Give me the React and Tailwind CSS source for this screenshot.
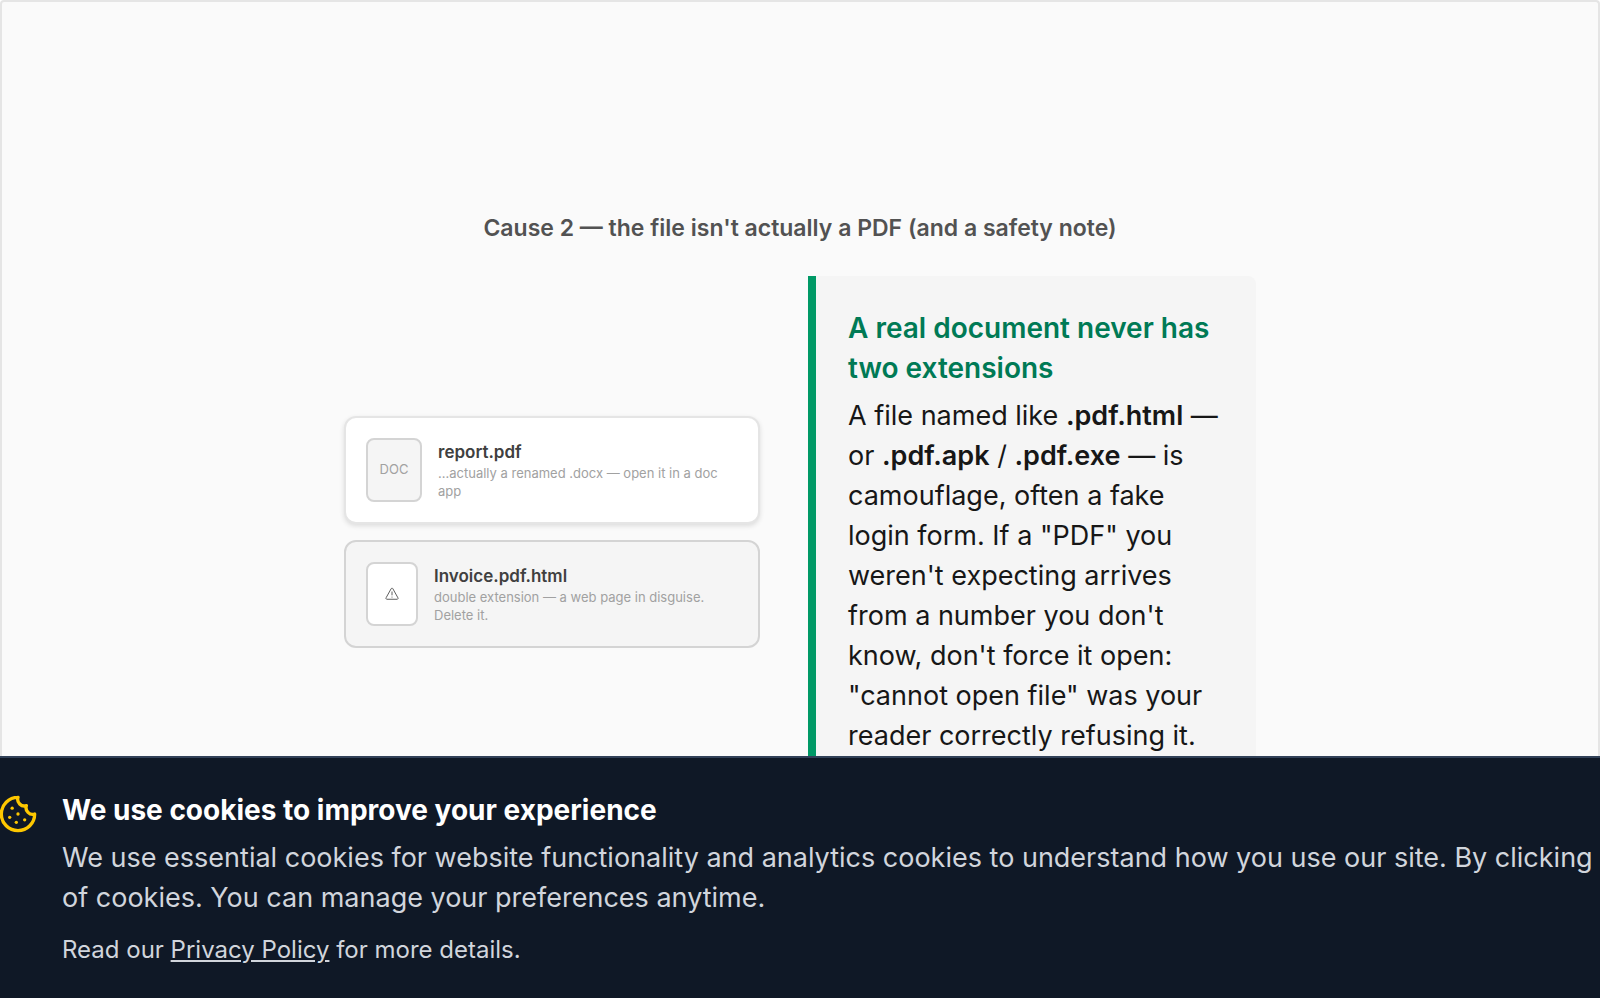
import { Cookie } from "lucide-react";

function WarningIcon() {
  return (
    <svg viewBox="0 0 12 12" className="size-3.5" fill="none" stroke="currentColor" strokeWidth="0.8" strokeLinejoin="round" strokeLinecap="round" aria-label="Warning">
      <path d="M5.3 1.4a.8.8 0 0 1 1.4 0l4.4 7.9a.8.8 0 0 1-.7 1.2H1.6a.8.8 0 0 1-.7-1.2z" />
      <path d="M6 4.2v2.6M6 8.6v.1" />
    </svg>
  );
}

function FileCard({ icon, iconClass, name, note, cardClass }) {
  return (
    <div className={"flex items-center gap-4 rounded-xl border-2 p-5 " + cardClass}>
      <div className={"flex h-16 shrink-0 items-center justify-center rounded-lg border-2 border-[#d4d4d4] text-[13px] " + iconClass}>
        {icon}
      </div>
      <div>
        <p className="text-[17px] leading-6 font-semibold text-[#404040]">{name}</p>
        <p className="text-[13px] leading-[18px] text-[#a1a1a1]">{note}</p>
      </div>
    </div>
  );
}

export default function App() {
  return (
    <div className="h-screen overflow-hidden bg-white font-['Inter',sans-serif]">
      <main className="h-full rounded-sm border-2 border-b-0 border-[#e5e5e5] bg-[#fafafa] px-8 pt-[210px]">
        <h2 className="text-center text-[23px] leading-8 font-semibold text-[#525252]">
          Cause 2 — the file isn't actually a PDF (and a safety note)
        </h2>
        <div className="mx-auto mt-8 grid max-w-[912px] grid-cols-[13fr_14fr] items-center gap-12">
          <div className="flex flex-col gap-4">
            <FileCard
              icon="DOC"
              iconClass="w-14 bg-[#f5f5f5] text-[#a1a1a1]"
              name="report.pdf"
              note="…actually a renamed .docx — open it in a doc app"
              cardClass="border-[#e5e5e5] bg-white shadow-[0_2px_5px_rgba(0,0,0,0.12)]"
            />
            <FileCard
              icon={<WarningIcon />}
              iconClass="w-[52px] bg-white text-[#525252]"
              name="Invoice.pdf.html"
              note="double extension — a web page in disguise. Delete it."
              cardClass="border-[#d4d4d4] bg-[#f5f5f5]"
            />
          </div>
          <aside className="rounded-r-lg border-l-8 border-[#009966] bg-[#f5f5f5] p-8 text-[27px] leading-10 text-[#171717]">
            <h3 className="mb-2 text-[28px] font-semibold text-[#007a55]">A real document never has two extensions</h3>
            <p>
              A file named like <strong className="font-semibold">.pdf.html</strong> — or{" "}
              <strong className="font-semibold">.pdf.apk</strong> / <strong className="font-semibold">.pdf.exe</strong> — is
              camouflage, often a fake login form. If a "PDF" you weren't expecting arrives from a number you don't know,
              don't force it open: "cannot open file" was your reader correctly refusing it.
            </p>
          </aside>
        </div>
      </main>
      <section aria-label="Cookie consent" className="fixed inset-x-0 bottom-0 overflow-hidden border-y-2 border-t-[#314158] border-b-white bg-[#0f1826] py-8">
        <div className="-ml-0.5 flex items-start gap-6">
          <Cookie className="mt-1 size-10 shrink-0 text-[#fdc700]" />
          <div className="text-[27px] leading-10 whitespace-nowrap text-[#d1d5dc]">
            <h2 className="mb-2 text-[28px] font-bold text-white">We use cookies to improve your experience</h2>
            <p>
              We use essential cookies for website functionality and analytics cookies to understand how you use our site. By clicking
              <br />
              of cookies. You can manage your preferences anytime.
            </p>
            <p className="mt-4 text-2xl leading-8">
              Read our{" "}
              <a href="#privacy" className="underline">Privacy Policy</a> for more details.
            </p>
          </div>
        </div>
      </section>
    </div>
  );
}
